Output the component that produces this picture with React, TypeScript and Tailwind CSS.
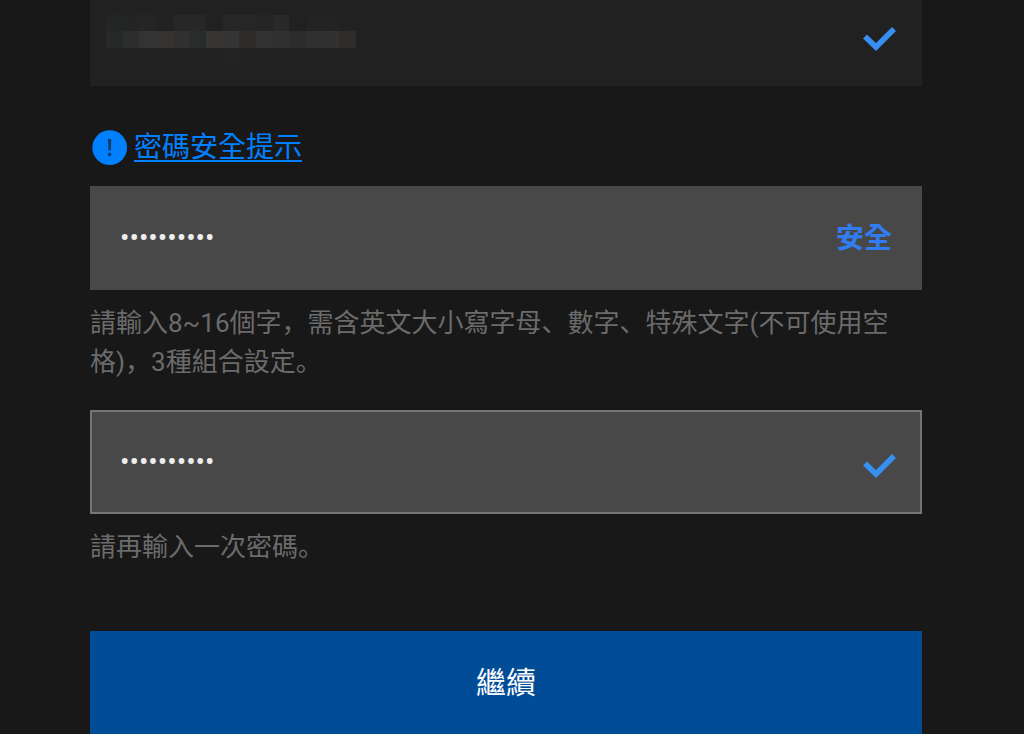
import { useState } from 'react';
import clsx from 'clsx';

// Shades of the masked account name, one entry per mosaic cell.
const MASK_ROWS = [
    ['#222625', '#242424', '#252525', '#222222', '#272727', '#272727', '#212121', '#262626', '#262626', '#252525', '#292929', '#212121', '#232323', '#232323', '#222222'],
    ['#252928', '#2d2d2d', '#333333', '#35322f', '#303030', '#282c2b', '#373632', '#343434', '#2e2b28', '#323232', '#303030', '#2c2c2c', '#303030', '#2f3231', '#2f2c2a'],
    ['', '', '', '', '', '', '', '#232323', '', '', '', '', '', '', ''],
];

function MaskedAccount() {
    return (
        <svg
            role="img"
            aria-label="••••••"
            width="250"
            height="49"
            viewBox="0 0 15 3"
            preserveAspectRatio="none"
            shapeRendering="crispEdges"
        >
            {MASK_ROWS.map((row, y) =>
                row.map((fill, x) => fill && (
                    <rect key={`${x}-${y}`} x={x} y={y} width="1" height="1" fill={fill} />
                )),
            )}
        </svg>
    );
}

function CheckMark() {
    return (
        <svg className="shrink-0" width="34" height="26" viewBox="0 0 34 26" fill="none" aria-hidden="true">
            <path d="M3 10.5 L14 21 L32 3" stroke="#388ff2" strokeWidth="5.6" />
        </svg>
    );
}

function AlertIcon() {
    return (
        <svg className="shrink-0" width="36" height="36" viewBox="0 0 36 36" aria-hidden="true">
            <circle cx="17.7" cy="17.7" r="17.4" fill="#0080ff" />
            <path d="M15.9 9h3.4l-.5 11.5h-2.4z" fill="#0f3a68" />
            <rect x="16" y="22.8" width="3.2" height="3.2" rx="1" fill="#0f3a68" />
        </svg>
    );
}

interface PasswordFieldProps {
    readonly id: string;
    readonly label: string;
    readonly hint: string;
    readonly outlined?: boolean;
    readonly children: React.ReactNode;
}

function PasswordField({ id, label, hint, outlined, children }: PasswordFieldProps) {
    const [value, setValue] = useState('Abcd#12345');

    return (
        <div>
            <div
                className={clsx(
                    'flex h-[104px] items-center border-2 bg-[#484848] pr-6 pl-7',
                    outlined ? 'border-[#757575]' : 'border-[#484848]',
                )}
            >
                <input
                    id={id}
                    type="password"
                    aria-label={label}
                    aria-describedby={`${id}-hint`}
                    value={value}
                    onChange={e => setValue(e.target.value)}
                    className="h-full min-w-0 flex-1 bg-transparent pb-0.5 text-[28px] text-[#eeeeee] outline-none"
                />
                {children}
            </div>
            {/* zh-Hans sets commas and full stops at the lower left of their cell */}
            <p id={`${id}-hint`} lang="zh-Hans" className="mt-[14px] text-[26px] leading-[39px] text-[#6b6b6b]">
                {hint}
            </p>
        </div>
    );
}

export default function App() {
    return (
        <main
            lang="zh-Hant"
            className="min-h-screen bg-[#181818] pr-[102px] pl-[90px] font-['Roboto','Noto_Sans_CJK_SC',sans-serif]"
        >
            <form onSubmit={e => e.preventDefault()}>
                <div className="flex h-[86px] items-center justify-between bg-[#212121] pr-[26px] pb-2 pl-4">
                    <MaskedAccount />
                    <CheckMark />
                </div>

                <div className="mt-11 mb-5 flex h-9 items-center gap-1.5 pl-0.5">
                    <AlertIcon />
                    <a
                        href="#password-tips"
                        className="text-[28px] leading-9 text-[#0080ff] underline decoration-2 underline-offset-[3px]"
                    >
                        密碼安全提示
                    </a>
                </div>

                <PasswordField
                    id="password"
                    label="密碼"
                    hint="請輸入8~16個字，需含英文大小寫字母、數字、特殊文字(不可使用空格)，3種組合設定。"
                >
                    <span className="pt-0.5 pr-1 text-[28px] font-bold text-[#317cf0]">安全</span>
                </PasswordField>

                <div className="mt-7">
                    <PasswordField id="confirm" label="再輸入一次密碼" hint="請再輸入一次密碼。" outlined>
                        <div className="pt-2">
                            <CheckMark />
                        </div>
                    </PasswordField>
                </div>

                <button
                    type="submit"
                    className="mt-16 block h-[103px] w-full bg-[#004c97] text-[30px] text-white"
                >
                    繼續
                </button>
            </form>
        </main>
    );
}
